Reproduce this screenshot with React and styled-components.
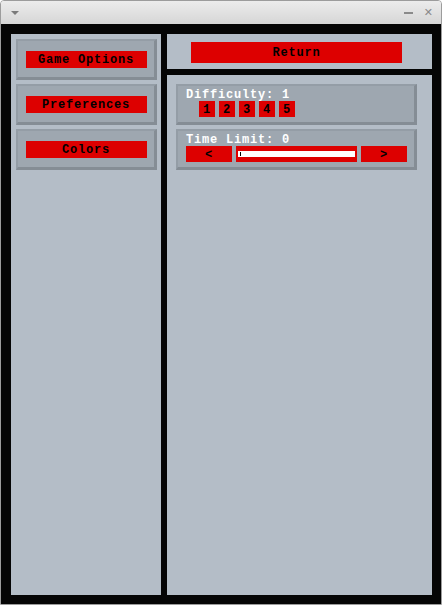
import styled, { createGlobalStyle } from 'styled-components';

const GlobalStyle = createGlobalStyle`
  html, body {
    margin: 0;
    padding: 0;
    background: #ffffff;
  }
`;

const App = () => {
  const levels = [1, 2, 3, 4, 5];

  return (
    <>
      <GlobalStyle />
      <Window>
        <TitleBar>
          <MenuArrow />
          <TitleButtons>
            <Minimize />
            <CloseGlyph>✕</CloseGlyph>
          </TitleButtons>
        </TitleBar>

        <Body>
          <SidePanel>
            <Frame $center>
              <RedButton $w={121} $h={17}>Game Options</RedButton>
            </Frame>
            <Frame $center>
              <RedButton $w={121} $h={17}>Preferences</RedButton>
            </Frame>
            <Frame $center>
              <RedButton $w={121} $h={17}>Colors</RedButton>
            </Frame>
          </SidePanel>

          <MainColumn>
            <TopPanel>
              <RedButton $w={211} $h={21}>Return</RedButton>
            </TopPanel>

            <OptionsPanel>
              <Frame>
                <OptionLabel>Difficulty: 1</OptionLabel>
                <LevelRow>
                  {levels.map((n) => (
                    <RedButton key={n} $w={16} $h={16}>{n}</RedButton>
                  ))}
                </LevelRow>
              </Frame>

              <Frame>
                <OptionLabel>Time Limit: 0</OptionLabel>
                <SliderRow>
                  <RedButton $w={46} $h={16}>&lt;</RedButton>
                  <SliderBox>
                    <SliderTrack>
                      <SliderTick />
                    </SliderTrack>
                  </SliderBox>
                  <RedButton $w={46} $h={16}>&gt;</RedButton>
                </SliderRow>
              </Frame>
            </OptionsPanel>
          </MainColumn>
        </Body>
      </Window>
    </>
  );
};

export default App;

// Styled Components
const Window = styled.div`
  width: 442px;
  height: 605px;
  box-sizing: border-box;
  border: 1px solid #9c9c9c;
  border-radius: 4px 4px 0 0;
  display: flex;
  flex-direction: column;
  overflow: hidden;
`;

const TitleBar = styled.div`
  height: 23px;
  flex-shrink: 0;
  background: linear-gradient(#ececec, #d6d6d6);
  display: flex;
  align-items: center;
  justify-content: space-between;
  padding: 0 8px 0 10px;
`;

const MenuArrow = styled.div`
  width: 0;
  height: 0;
  border-left: 4px solid transparent;
  border-right: 4px solid transparent;
  border-top: 4px solid #7a7a7a;
  margin-top: 1px;
`;

const TitleButtons = styled.div`
  display: flex;
  align-items: center;
  gap: 11px;
`;

const Minimize = styled.div`
  width: 9px;
  height: 2px;
  background: #8a8a8a;
  margin-top: 1px;
`;

const CloseGlyph = styled.span`
  font-family: 'DejaVu Sans', sans-serif;
  font-weight: bold;
  font-size: 11px;
  color: #8a8a8a;
  line-height: 1;
`;

const Body = styled.div`
  flex: 1;
  background: #050505;
  display: flex;
  gap: 6px;
  padding: 10px 9px 9px 10px;
`;

const SidePanel = styled.div`
  width: 150px;
  flex-shrink: 0;
  background: #b4bdc7;
  box-sizing: border-box;
  padding: 5px 4px 0 5px;
  display: flex;
  flex-direction: column;
  gap: 4px;
`;

const MainColumn = styled.div`
  flex: 1;
  display: flex;
  flex-direction: column;
  gap: 6px;
`;

const TopPanel = styled.div`
  height: 35px;
  background: #b4bdc7;
  box-sizing: border-box;
  padding: 8px 0 0 24px;
`;

const OptionsPanel = styled.div`
  flex: 1;
  background: #b4bdc7;
  box-sizing: border-box;
  padding: 9px 15px 0 9px;
  display: flex;
  flex-direction: column;
  gap: 4px;
`;

const Frame = styled.div`
  height: 41px;
  box-sizing: border-box;
  background: #9ea7b0;
  border-top: 2px solid #949da6;
  border-left: 2px solid #949da6;
  border-bottom: 3px solid #858d95;
  border-right: 3px solid #858d95;
  display: flex;
  flex-direction: column;
  ${({ $center }) =>
    $center
      ? 'align-items: center; justify-content: center;'
      : 'padding: 4px 0 0 8px;'}
`;

const RedButton = styled.div`
  width: ${({ $w }) => $w}px;
  height: ${({ $h }) => $h}px;
  flex-shrink: 0;
  background: #dd0000;
  color: #000000;
  font-family: 'Liberation Mono', 'DejaVu Sans Mono', monospace;
  font-weight: bold;
  font-size: 12px;
  letter-spacing: 0.8px;
  display: flex;
  align-items: center;
  justify-content: center;
  padding-top: 1px;
  box-sizing: border-box;
`;

const OptionLabel = styled.div`
  color: #ffffff;
  font-family: 'Liberation Mono', 'DejaVu Sans Mono', monospace;
  font-weight: bold;
  font-size: 12px;
  letter-spacing: 0.8px;
  line-height: 11px;
  height: 11px;
`;

const LevelRow = styled.div`
  display: flex;
  gap: 4px;
  margin-left: 13px;
`;

const SliderRow = styled.div`
  display: flex;
  gap: 4px;
`;

const SliderBox = styled.div`
  width: 121px;
  height: 16px;
  background: #dd0000;
  box-sizing: border-box;
  padding: 5px 2px;
`;

const SliderTrack = styled.div`
  height: 6px;
  background: #ffffff;
  display: flex;
  align-items: center;
  padding-left: 2px;
`;

const SliderTick = styled.div`
  width: 1px;
  height: 4px;
  background: #000000;
`;
